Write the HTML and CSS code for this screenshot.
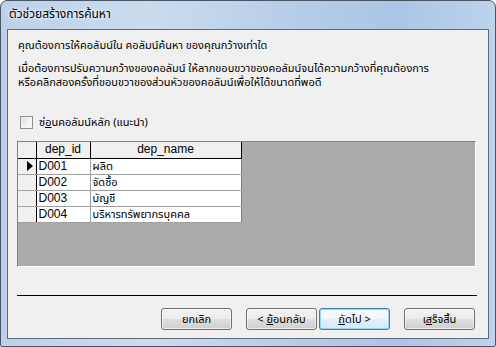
FILE: index.html
```html
<!DOCTYPE html>
<html lang="th">
<head>
<meta charset="utf-8">
<title>ตัวช่วยสร้างการค้นหา</title>
<link rel="stylesheet" href="styles.css">
</head>
<body>
<div class="window">
  <div class="titlebar"><span class="title">ตัวช่วยสร้างการค้นหา</span></div>
  <div class="client">
    <div class="heading">คุณต้องการให้คอลัมน์ใน คอลัมน์ค้นหา ของคุณกว้างเท่าใด</div>
    <p class="info">เมื่อต้องการปรับความกว้างของคอลัมน์ ให้ลากขอบขวาของคอลัมน์จนได้ความกว้างที่คุณต้องการ<br>หรือคลิกสองครั้งที่ขอบขวาของส่วนหัวของคอลัมน์เพื่อให้ได้ขนาดที่พอดี</p>
    <label class="check"><span class="box"></span><span>ซ่<u>อ</u>นคอลัมน์หลัก (แนะนำ)</span></label>
    <div class="gridarea">
      <table class="grid">
        <colgroup><col class="k0"><col class="k1"><col class="k2"></colgroup>
        <thead>
          <tr><th class="sel"></th><th>dep_id</th><th>dep_name</th></tr>
        </thead>
        <tbody>
          <tr><td class="sel"><span class="arrow"></span></td><td>D001</td><td class="th">ผลิต</td></tr>
          <tr><td class="sel"></td><td>D002</td><td class="th">จัดซื้อ</td></tr>
          <tr><td class="sel"></td><td>D003</td><td class="th">บัญชี</td></tr>
          <tr><td class="sel"></td><td>D004</td><td class="th">บริหารทรัพยากรบุคคล</td></tr>
        </tbody>
      </table>
    </div>
    <div class="divider"></div>
    <div class="buttons">
      <button class="btn">ยกเลิก</button>
      <div class="pair">
        <button class="btn">&lt; <u>ย</u>้อนกลับ</button>
        <button class="btn focus"><u>ถ</u>ัดไป &gt;</button>
      </div>
      <button class="btn">เ<u>ส</u>ร็จสิ้น</button>
    </div>
  </div>
</div>
</body>
</html>
```
FILE: styles.css
```css
html, body {
  margin: 0;
  padding: 0;
  background: #ffffff;
}
body {
  width: 496px;
  height: 347px;
  overflow: hidden;
  font-family: Tahoma, "Noto Sans Thai", "DejaVu Sans", "Liberation Sans", sans-serif;
  font-size: 11px;
  color: #000;
}
.window {
  box-sizing: border-box;
  width: 496px;
  height: 347px;
  border: 1px solid #4a5565;
  border-radius: 7px 7px 2px 2px;
  background: linear-gradient(90deg, #bcd1e9 0%, #cadbee 30%, #b6cde8 60%, #aac5e5 80%, #bdd3ec 100%);
  display: flex;
  flex-direction: column;
  padding: 0 6px 7px 6px;
}
.titlebar {
  height: 28px;
  display: flex;
  align-items: center;
  padding-left: 2px;
}
.title {
  font-size: 12px;
  color: #000;
  text-shadow: 0 0 6px rgba(255,255,255,0.9), 0 0 3px rgba(255,255,255,0.8);
  position: relative;
  top: -1px;
}
.client {
  flex: 1;
  background: #f0f0f0;
  border: 1px solid #5d6b7d;
  display: flex;
  flex-direction: column;
  padding: 0 10px 0 9px;
}
.heading {
  margin-top: 9px;
  height: 14px;
  line-height: 14px;
  padding-left: 1px;
}
.info {
  margin: 9px 0 0 0;
  line-height: 14px;
  padding-left: 1px;
}
.check {
  display: flex;
  align-items: center;
  gap: 6px;
  margin-top: 25px;
  padding-left: 3px;
  height: 14px;
}
.box {
  box-sizing: border-box;
  width: 13px;
  height: 13px;
  border: 1px solid #8e8f8f;
  background: linear-gradient(135deg, #dcdcdc 0%, #f4f4f4 60%, #ffffff 100%);
  box-shadow: inset 0 0 0 1px #f4f4f4;
}
.check u { text-decoration: underline; }
.gridarea {
  margin-top: 12px;
  height: 126px;
  box-sizing: border-box;
  background: #ababab;
  border-top: 1px solid #808080;
  border-left: 1px solid #808080;
  border-right: 1px solid #ffffff;
  border-bottom: 1px solid #ffffff;
  margin-right: 2px;
}
.grid {
  border-collapse: collapse;
  table-layout: fixed;
  width: 223px;
  font-family: "Liberation Sans", Tahoma, "Noto Sans Thai", sans-serif;
  font-size: 12px;
}
.k0 { width: 18px; }
.k1 { width: 54px; }
.k2 { width: 151px; }
.grid tr { height: 16px; }
.grid th, .grid td {
  padding: 0 2px;
  line-height: 15px;
  white-space: nowrap;
  overflow: hidden;
}
.grid th {
  background: #f0f0f0;
  font-weight: normal;
  border: 1px solid #000;
  border-top: none;
}
.grid th:first-child { border-left: none; }
.grid td {
  background: #ffffff;
  border: 1px solid #a0a0a0;
  border-top: none;
}
.grid td.sel {
  background: #f0f0f0;
  border-right: 1px solid #000;
  border-left: none;
  border-bottom: 1px solid #a0a0a0;
}
.grid td:last-child {
  border-right: 1px solid #808080;
}
.grid .sel { padding: 0; }
.grid td.th {
  font-family: Tahoma, "Noto Sans Thai", "DejaVu Sans", sans-serif;
  font-size: 11px;
}
.arrow {
  display: block;
  width: 0;
  height: 0;
  margin-left: 9px;
  border-top: 5px solid transparent;
  border-bottom: 5px solid transparent;
  border-left: 6px solid #000;
}
.divider {
  margin-top: 28px;
  height: 1px;
  background: #000;
  margin-right: 1px;
}
.buttons {
  display: flex;
  justify-content: flex-end;
  gap: 14px;
  margin-top: 12px;
  padding-right: 3px;
}
.pair {
  display: flex;
  gap: 2px;
}
.btn {
  box-sizing: border-box;
  width: 71px;
  height: 22px;
  padding: 0;
  border: 1px solid #707070;
  border-radius: 3px;
  background: linear-gradient(#f2f2f2 0%, #ebebeb 50%, #dddddd 51%, #cfcfcf 100%);
  box-shadow: inset 0 0 0 1px rgba(255,255,255,0.6);
  font-family: Tahoma, "Noto Sans Thai", "DejaVu Sans", sans-serif;
  font-size: 11px;
  color: #000;
}
.btn.focus {
  border-color: #3c7fb1;
  box-shadow: inset 0 0 0 1px #9ad3f6;
  background: linear-gradient(#f7fcfe 0%, #eef7fc 50%, #e2f0f9 51%, #d7eaf6 100%);
}
```
